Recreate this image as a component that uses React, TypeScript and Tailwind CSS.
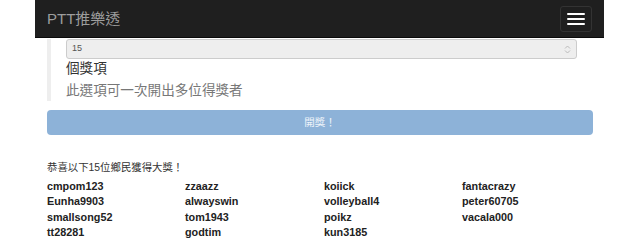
import React from 'react';

const winners = [
  'cmpom123', 'zzaazz', 'koiick', 'fantacrazy',
  'Eunha9903', 'alwayswin', 'volleyball4', 'peter60705',
  'smallsong52', 'tom1943', 'poikz', 'vacala000',
  'tt28281', 'godtim', 'kun3185',
];

const App: React.FC = () => {
  return (
    <div
      className="w-[640px] h-[241px] overflow-hidden bg-white text-[#333]"
      style={{ fontFamily: '"Liberation Sans", "Noto Sans CJK TC", sans-serif' }}
    >
      {/* Navbar */}
      <div className="ml-[35px] w-[569px] h-[38px] bg-[#1f1f1f] border-b border-[#0a0a0a] flex items-center justify-between pl-[12px] pr-[12px]">
        <span className="text-[15px] text-[#9d9d9d] leading-none">PTT推樂透</span>
        <button className="w-[32px] h-[26px] border border-[#333] rounded-[3px] flex flex-col items-center justify-center gap-[3px]">
          <span className="block w-[18px] h-[2px] bg-white rounded-[1px]" />
          <span className="block w-[18px] h-[2px] bg-white rounded-[1px]" />
          <span className="block w-[18px] h-[2px] bg-white rounded-[1px]" />
        </button>
      </div>

      <div className="ml-[47px] w-[546px]">
        {/* Prize count */}
        <div className="border-l-[4px] border-[#eee] pl-[15px] pr-[16px] h-[62px]">
          <div className="mt-[1px] h-[20px] bg-[#eee] border border-[#ccc] rounded-[3px] flex items-center justify-between px-[5px]">
            <span className="text-[9px] text-[#555]">15</span>
            <svg width="7" height="9" viewBox="0 0 7 9" fill="none" stroke="#bbb" strokeWidth="1">
              <path d="M1 3.5 L3.5 1 L6 3.5" />
              <path d="M1 5.5 L3.5 8 L6 5.5" />
            </svg>
          </div>
          <div className="text-[13.6px] leading-[22px] mt-[-1px] text-[#333]">個獎項</div>
          <div className="text-[13.6px] leading-[22px] text-[#777]">此選項可一次開出多位得獎者</div>
        </div>

        {/* Draw button */}
        <button className="mt-[9px] w-full h-[25px] rounded-[4px] bg-[#8db2d8] text-white/85 text-[10.5px] flex items-center justify-center">
          開獎！
        </button>

        {/* Results */}
        <div className="mt-[25px] text-[10.4px] leading-[16px] text-[#333]">恭喜以下15位鄉民獲得大獎！</div>
        <div className="mt-[3px] grid grid-cols-[138px_139px_138px_1fr]">
          {winners.map((name) => (
            <div key={name} className="text-[10.8px] font-bold leading-[15.4px] text-[#222]">
              {name}
            </div>
          ))}
        </div>
      </div>
    </div>
  );
};

export default App;
